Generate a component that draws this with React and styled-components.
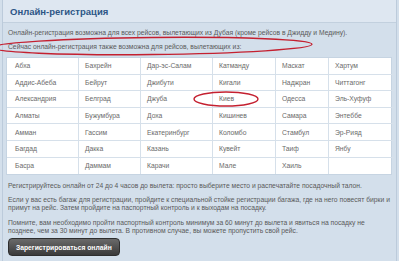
import styled, { createGlobalStyle } from "styled-components";

const Global = createGlobalStyle`
html,body{margin:0;padding:0;background:#d3dfeb;}
body{font-family:"Liberation Sans",Arial,sans-serif;}
`;

const Page = styled.div`
position:relative;
width:399px;
height:261px;
overflow:hidden;
background:#d3dfeb;
`;

const Panel = styled.div`
margin:0 2px;
border-left:1px solid #bccbdb;
border-right:1px solid #bccbdb;
height:261px;
box-sizing:border-box;
`;

const Header = styled.div`
height:22px;
display:flex;
align-items:center;
padding-left:7px;
background:#dee7f1;
border-bottom:1px solid #c2d0de;
`;

const Title = styled.h2`
margin:0;
font-size:9.5px;
font-weight:bold;
color:#2d5686;
`;

const Body = styled.div`
padding:3px 4px 0 3px;
`;

const Intro = styled.p`
margin:0;
padding-left:2px;
font-size:6.75px;
line-height:14px;
color:#5a5a5a;
`;

const Grid = styled.div`
margin-top:3px;
display:grid;
grid-template-columns:72px 62px 72px 63px 53px 65px;
background:#fff;
border:1px solid #c6d4e2;
`;

const Cell = styled.div`
height:16.6px;
box-sizing:border-box;
display:flex;
align-items:center;
padding-left:${p => p.$first ? 8 : 6}px;
font-size:6.75px;
color:#6a6a6a;
border-right:${p => p.$last ? "none" : "1px solid #d6e0ea"};
border-bottom:${p => p.$bottom ? "none" : "1px solid #d6e0ea"};
`;

const Note = styled.p`
margin:${p => p.$gap}px 0 0 0;
padding:0 2px;
font-size:6.75px;
line-height:8px;
color:#5a5a5a;
`;

const Button = styled.button`
margin:3px 0 0 2px;
height:18px;
padding:0 7px;
border:1px solid #2e2e2e;
border-radius:4px;
background:linear-gradient(#6a6a6a,#3a3a3a);
color:#fff;
font-family:"Liberation Sans",Arial,sans-serif;
font-size:6.75px;
font-weight:bold;
`;

const Marks = styled.svg`
position:absolute;
left:0;
top:0;
pointer-events:none;
`;

const rows = [
  ["Абха","Бахрейн","Дар-эс-Салам","Катманду","Маскат","Хартум"],
  ["Аддис-Абеба","Бейрут","Джибути","Кигали","Наджран","Читтагонг"],
  ["Александрия","Белград","Джуба","Киев","Одесса","Эль-Хуфуф"],
  ["Алматы","Бужумбура","Доха","Кишинев","Самара","Энтеббе"],
  ["Амман","Гассим","Екатеринбург","Коломбо","Стамбул","Эр-Рияд"],
  ["Багдад","Дакка","Казань","Кувейт","Таиф","Янбу"],
  ["Басра","Даммам","Карачи","Мале","Хаиль",""],
];

export default function App(){
  return(
    <Page>
      <Global/>
      <Panel>
        <Header><Title>Онлайн-регистрация</Title></Header>
        <Body>
          <Intro>Онлайн-регистрация возможна для всех рейсов, вылетающих из Дубая (кроме рейсов в Джидду и Медину).</Intro>
          <Intro>Сейчас онлайн-регистрация также возможна для рейсов, вылетающих из:</Intro>
          <Grid>
            {rows.map((r,i)=>r.map((c,j)=>(
              <Cell key={i+"-"+j} $first={j===0} $last={j===5} $bottom={i===6}>{c}</Cell>
            )))}
          </Grid>
          <Note $gap={7}>Регистрируйтесь онлайн от 24 до 4 часов до вылета: просто выберите место и распечатайте посадочный талон.</Note>
          <Note $gap={6}>Если у вас есть багаж для регистрации, пройдите к специальной стойке регистрации багажа, где на него повесят бирки и примут на рейс. Затем пройдите на паспортный контроль и к выходам на посадку.</Note>
          <Note $gap={7}>Помните, вам необходимо пройти паспортный контроль минимум за 60 минут до вылета и явиться на посадку не позднее, чем за 30 минут до вылета. В противном случае, вы можете пропустить свой рейс.</Note>
          <Button>Зарегистрироваться онлайн</Button>
        </Body>
      </Panel>
      <Marks width="399" height="261">
        <ellipse cx="152" cy="46" rx="160" ry="8.5" fill="none" stroke="#c42030" strokeWidth="1.4" transform="rotate(-0.6 152 46)"/>
        <ellipse cx="226" cy="99" rx="32" ry="7" fill="none" stroke="#c42030" strokeWidth="1.4"/>
      </Marks>
    </Page>
  )
}
